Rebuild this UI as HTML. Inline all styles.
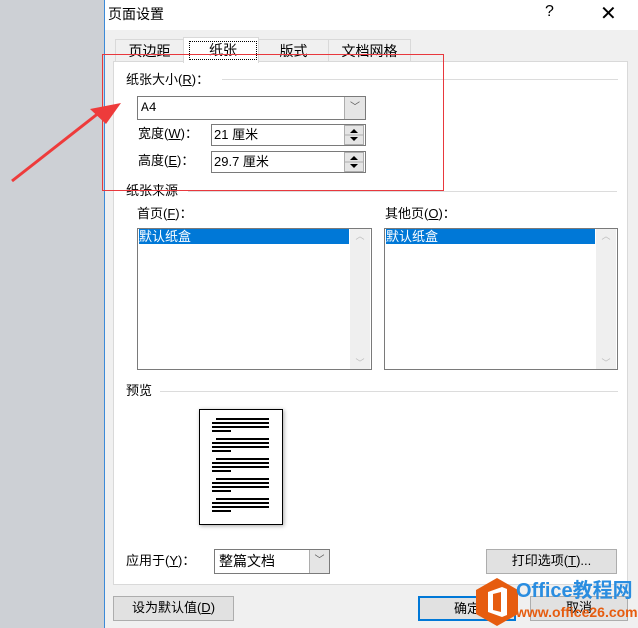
<!DOCTYPE html>
<html><head><meta charset="utf-8"><style>
*{margin:0;padding:0;box-sizing:border-box}
body{width:638px;height:628px;overflow:hidden;position:relative;background:#f0f0f0;font-family:"Liberation Sans","Noto Sans CJK SC",sans-serif;font-size:13px;color:#000}
.a{position:absolute;white-space:nowrap}
.t{line-height:16px}
.box{position:absolute;background:#fff;border:1px solid #7a7a7a}
.btn{position:absolute;background:#e1e1e1;border:1px solid #adadad;text-align:center;line-height:22px}
.ln{position:absolute;height:1px;background:#dcdcdc}
.pl{position:absolute;height:2px;background:#000}
</style></head><body>
<div class="a" style="left:0;top:0;width:104px;height:628px;background:#cdd0d5"></div>
<div class="a" style="left:104px;top:0;width:1px;height:628px;background:#3c8ad8"></div>
<div class="a" style="left:105px;top:0;width:533px;height:30px;background:#fff"></div>
<div class="a t" style="left:108px;top:6px;font-size:14px">页面设置</div>
<div class="a" style="left:545px;top:3px;font-size:16px">?</div>
<div class="a" style="left:600px;top:1px;font-size:20px;font-weight:300">✕</div>
<!-- tabs -->
<div class="a" style="left:115px;top:39px;width:69px;height:23px;border:1px solid #d9d9d9;border-bottom:none;text-align:center;line-height:22px;font-size:14px">页边距</div>
<div class="a" style="left:258px;top:39px;width:71px;height:23px;border:1px solid #d9d9d9;border-bottom:none;text-align:center;line-height:22px;font-size:14px">版式</div>
<div class="a" style="left:328px;top:39px;width:83px;height:23px;border:1px solid #d9d9d9;border-bottom:none;text-align:center;line-height:22px;font-size:14px">文档网格</div>
<div class="a" style="left:113px;top:61px;width:515px;height:524px;background:#fff;border:1px solid #d9d9d9"></div>
<div class="a" style="left:183px;top:37px;width:76px;height:26px;background:#fff;border:1px solid #d9d9d9;border-bottom:none"></div>
<div class="a" style="left:189px;top:41px;width:68px;height:19px;border:1px dotted #000;text-align:center;line-height:17px;font-size:14px">纸张</div>
<!-- paper size -->
<div class="a t" style="left:126px;top:72px">纸张大小(<u>R</u>)：</div>
<div class="ln" style="left:222px;top:79px;width:396px"></div>
<div class="box" style="left:137px;top:96px;width:229px;height:24px"></div>
<div class="a t" style="left:141px;top:100px;font-family:'Liberation Mono',monospace">A4</div>
<div class="a" style="left:344px;top:97px;width:21px;height:22px;background:#e5e5e5;border-left:1px solid #adadad;text-align:center;font-size:10px;line-height:22px;color:#555">﹀</div>
<div class="a t" style="left:138px;top:126px">宽度(<u>W</u>)：</div>
<div class="box" style="left:211px;top:124px;width:155px;height:22px"></div>
<div class="a t" style="left:214px;top:127px">21 厘米</div>
<div class="a t" style="left:138px;top:153px">高度(<u>E</u>)：</div>
<div class="box" style="left:211px;top:151px;width:155px;height:22px"></div>
<div class="a t" style="left:214px;top:154px">29.7 厘米</div>
<svg class="a" style="left:344px;top:125px" width="21" height="47"><g fill="#e5e5e5" stroke="#adadad"><rect x=".5" y=".5" width="19" height="9.5"/><rect x=".5" y="10" width="19" height="9.5"/><rect x=".5" y="27.5" width="19" height="9.5"/><rect x=".5" y="37" width="19" height="9.5"/></g><g fill="#000"><path d="M6 8h8l-4-4z"/><path d="M6 12h8l-4 4z"/><path d="M6 35h8l-4-4z"/><path d="M6 39h8l-4 4z"/></g></svg>
<!-- source -->
<div class="a t" style="left:126px;top:183px">纸张来源</div>
<div class="ln" style="left:188px;top:191px;width:429px"></div>
<div class="a t" style="left:137px;top:206px">首页(<u>F</u>)：</div>
<div class="a t" style="left:385px;top:206px">其他页(<u>O</u>)：</div>
<div class="box" style="left:137px;top:228px;width:235px;height:142px"></div>
<div class="a t" style="left:139px;top:229px;width:210px;height:15px;background:#0078d7;color:#fff;line-height:15px">默认纸盒</div>
<div class="a" style="left:350px;top:229px;width:20px;height:140px;background:#efefef;color:#bbb;font-size:9px;text-align:center">︿<div style="position:absolute;bottom:0;width:20px">﹀</div></div>
<div class="box" style="left:384px;top:228px;width:234px;height:142px"></div>
<div class="a t" style="left:386px;top:229px;width:209px;height:15px;background:#0078d7;color:#fff;line-height:15px">默认纸盒</div>
<div class="a" style="left:596px;top:229px;width:20px;height:140px;background:#efefef;color:#bbb;font-size:9px;text-align:center">︿<div style="position:absolute;bottom:0;width:20px">﹀</div></div>
<!-- preview -->
<div class="a t" style="left:126px;top:383px">预览</div>
<div class="ln" style="left:160px;top:391px;width:458px"></div>
<div class="a" style="left:199px;top:409px;width:84px;height:116px;border:1px solid #000;background:#fff;box-shadow:1px 1px 4px rgba(0,0,0,.35)"></div>
<div id="pg"></div>
<!-- apply -->
<div class="a t" style="left:126px;top:553px">应用于(<u>Y</u>)：</div>
<div class="box" style="left:214px;top:549px;width:116px;height:25px"></div>
<div class="a t" style="left:219px;top:553px;font-size:14px">整篇文档</div>
<div class="a" style="left:309px;top:550px;width:20px;height:23px;background:#e5e5e5;border-left:1px solid #adadad;text-align:center;font-size:10px;line-height:22px;color:#555">﹀</div>
<div class="btn" style="left:486px;top:549px;width:131px;height:25px">打印选项(<u>T</u>)...</div>
<!-- bottom -->
<div class="btn" style="left:113px;top:596px;width:121px;height:25px">设为默认值(<u>D</u>)</div>
<div class="btn" style="left:418px;top:596px;width:98px;height:25px;border:2px solid #0078d7;line-height:21px">确定</div>
<div class="btn" style="left:530px;top:596px;width:98px;height:25px">取消</div>
<!-- watermark -->
<svg class="a" style="left:473px;top:577px" width="48" height="50"><path d="M24 1L45 13V37L24 49L3 37V13Z" fill="#e65c0f"/><path d="M15 15L29 10L34 12V38L29 40L15 35Z" fill="#fff"/><path d="M20 17L28 15V35L20 33Z" fill="#e65c0f"/></svg>
<div class="a" style="left:516px;top:579px;font-size:20px;font-weight:bold;color:#2a8de0;line-height:24px">Office教程网</div>
<div class="a" style="left:516px;top:603px;font-size:14px;font-weight:bold;color:#e65c0f;line-height:18px">www.office26.com</div>
<!-- red box & arrow -->
<div class="a" style="left:102px;top:54px;width:342px;height:137px;border:1px solid #e8383d"></div>
<svg class="a" style="left:0;top:0" width="140" height="200"><path d="M12 181L100 112" stroke="#ee3b3b" stroke-width="3"/><path d="M121 103L90 109L106 124Z" fill="#ee3b3b"/></svg>
<script>
var h='';for(var g=0;g<5;g++){var y=418+g*20;h+='<div class="pl" style="left:216px;top:'+y+'px;width:53px"></div><div class="pl" style="left:212px;top:'+(y+4)+'px;width:57px"></div><div class="pl" style="left:212px;top:'+(y+8)+'px;width:57px"></div><div class="pl" style="left:212px;top:'+(y+12)+'px;width:19px"></div>';}
document.getElementById('pg').innerHTML=h;
</script>
</body></html>
